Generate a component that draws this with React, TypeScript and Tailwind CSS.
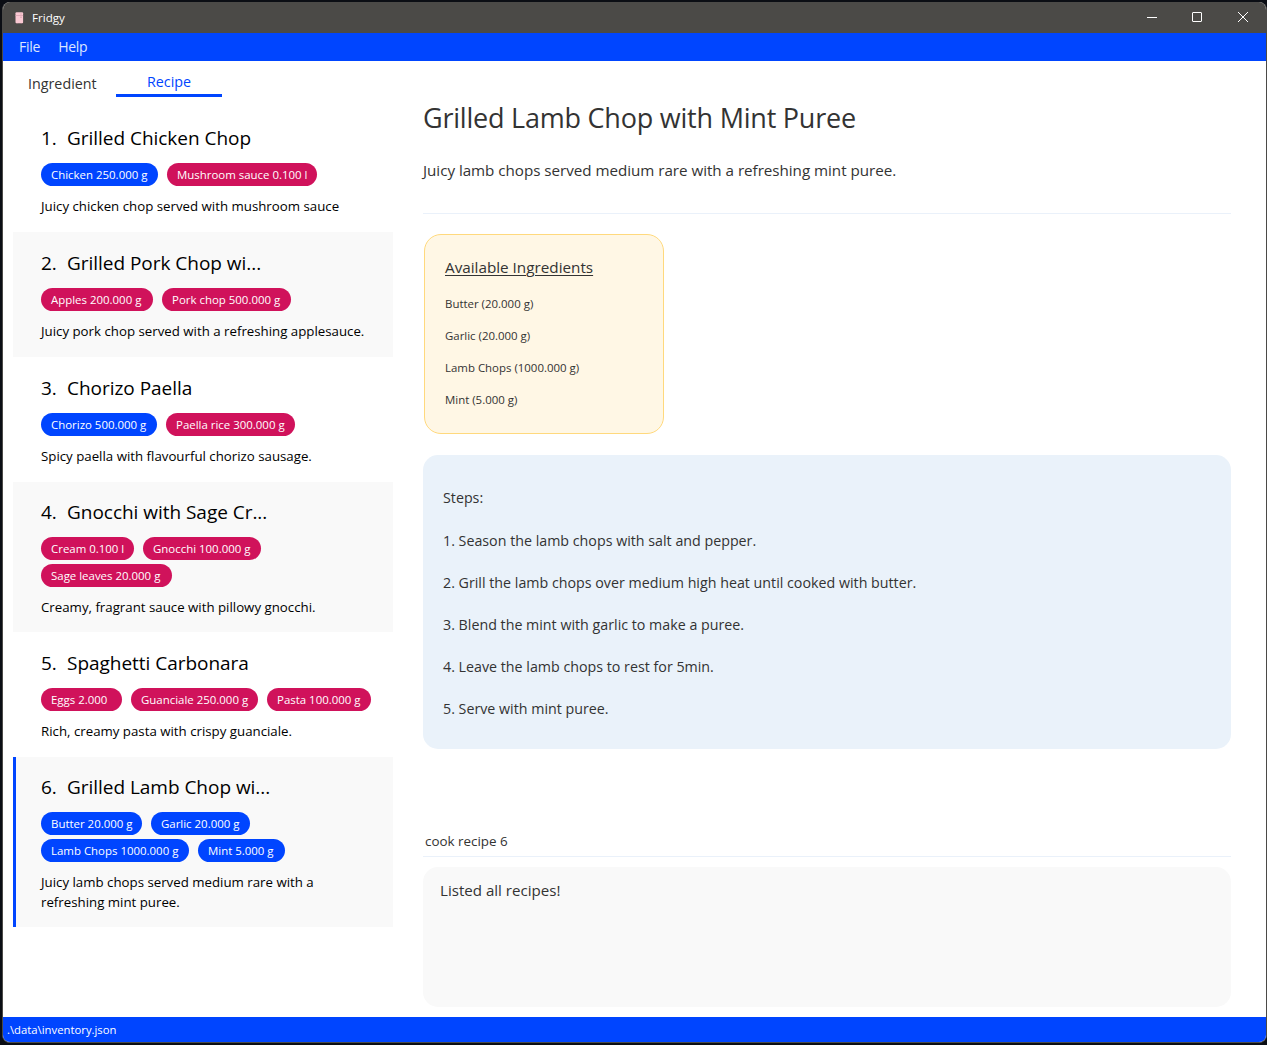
type Chip = { label: string; width: string; missing?: boolean };

type Recipe = {
  name: string;
  chips: Chip[];
  description: string;
  height: string;
  shaded?: boolean;
  selected?: boolean;
};

const recipes: Recipe[] = [
  {
    name: "Grilled Chicken Chop",
    chips: [
      { label: "Chicken 250.000 g", width: "w-[117px]" },
      { label: "Mushroom sauce 0.100 l", width: "w-[150px]", missing: true },
    ],
    description: "Juicy chicken chop served with mushroom sauce",
    height: "h-[125px]",
  },
  {
    name: "Grilled Pork Chop wi...",
    chips: [
      { label: "Apples 200.000 g", width: "w-[112px]", missing: true },
      { label: "Pork chop 500.000 g", width: "w-[129px]", missing: true },
    ],
    description: "Juicy pork chop served with a refreshing applesauce.",
    height: "h-[125px]",
    shaded: true,
  },
  {
    name: "Chorizo Paella",
    chips: [
      { label: "Chorizo 500.000 g", width: "w-[116px]" },
      { label: "Paella rice 300.000 g", width: "w-[129px]", missing: true },
    ],
    description: "Spicy paella with flavourful chorizo sausage.",
    height: "h-[125px]",
  },
  {
    name: "Gnocchi with Sage Cr...",
    chips: [
      { label: "Cream 0.100 l", width: "w-[93px]", missing: true },
      { label: "Gnocchi 100.000 g", width: "w-[118px]", missing: true },
      { label: "Sage leaves 20.000 g", width: "w-[131px]", missing: true },
    ],
    description: "Creamy, fragrant sauce with pillowy gnocchi.",
    height: "h-[150px]",
    shaded: true,
  },
  {
    name: "Spaghetti Carbonara",
    chips: [
      { label: "Eggs 2.000", width: "w-[81px]", missing: true },
      { label: "Guanciale 250.000 g", width: "w-[127px]", missing: true },
      { label: "Pasta 100.000 g", width: "w-[104px]", missing: true },
    ],
    description: "Rich, creamy pasta with crispy guanciale.",
    height: "h-[125px]",
  },
  {
    name: "Grilled Lamb Chop wi...",
    chips: [
      { label: "Butter 20.000 g", width: "w-[101px]" },
      { label: "Garlic 20.000 g", width: "w-[99px]" },
      { label: "Lamb Chops 1000.000 g", width: "w-[148px]" },
      { label: "Mint 5.000 g", width: "w-[87px]" },
    ],
    description: "Juicy lamb chops served medium rare with a refreshing mint puree.",
    height: "h-[170px]",
    shaded: true,
    selected: true,
  },
];

const available = ["Butter (20.000 g)", "Garlic (20.000 g)", "Lamb Chops (1000.000 g)", "Mint (5.000 g)"];

const steps = [
  "1. Season the lamb chops with salt and pepper.",
  "2. Grill the lamb chops over medium high heat until cooked with butter.",
  "3. Blend the mint with garlic to make a puree.",
  "4. Leave the lamb chops to rest for 5min.",
  "5. Serve with mint puree.",
];

function FridgeIcon() {
  return (
    <svg className="mt-px" width="9" height="12" viewBox="0 0 9 12" aria-hidden="true">
      <rect x="0.5" y="0.2" width="7.6" height="11" rx="1" fill="#f9c8d2" />
      <path d="M0.5 3.5h7.6" stroke="#dba3b1" strokeWidth="0.8" />
      <path d="M6 1.5v1M6 4.5v1.5" stroke="#c48e9c" strokeWidth="0.8" />
      <path d="M1.5 11.5h1.5M5.6 11.5h1.5" stroke="#8d6b75" strokeWidth="0.8" />
    </svg>
  );
}

function TitleBar() {
  return (
    <header className="flex h-[31px] shrink-0 items-center bg-[#4b4a47] pl-3 text-white">
      <FridgeIcon />
      <span className="ml-2 text-[11.6px]">Fridgy</span>
      <div className="ml-auto flex h-full items-center">
        <button className="flex h-full w-[46px] items-center justify-center pb-px" aria-label="Minimize">
          <svg width="10" height="10" viewBox="0 0 10 10" shapeRendering="crispEdges">
            <path d="M0 5.5h10" stroke="#fff" />
          </svg>
        </button>
        <button className="flex h-full w-[44px] items-center justify-center pb-px" aria-label="Maximize">
          <svg width="10" height="10" viewBox="0 0 10 10">
            <rect x="0.5" y="0.5" width="9" height="9" rx="0.5" fill="none" stroke="#fff" />
          </svg>
        </button>
        <button className="flex h-full w-[47px] items-center justify-center pb-px" aria-label="Close">
          <svg width="10" height="10" viewBox="0 0 10 10">
            <path d="M0 0l10 10M10 0L0 10" stroke="#fff" />
          </svg>
        </button>
      </div>
    </header>
  );
}

function RecipeCard({ recipe, index }: { recipe: Recipe; index: number }) {
  return (
    <li
      className={`flex flex-col justify-center border-l-[3px] pl-[25px] ${recipe.height} ${recipe.shaded ? "bg-[#f9f9f9]" : "bg-white"} ${
        recipe.selected ? "border-[#0045ff]" : "border-transparent"
      }`}
    >
      <div className="flex text-[19px] leading-[30px] tracking-[-0.03px]">
        <span className="w-[26px]">{index}.</span>
        <span>{recipe.name}</span>
      </div>
      <div className="mt-[10px] flex w-[335px] flex-wrap gap-x-[9px] gap-y-1">
        {recipe.chips.map((chip) => (
          <span
            key={chip.label}
            className={`h-[23px] rounded-full pl-[10px] text-[11.45px] leading-[23px] whitespace-nowrap text-white ${chip.width} ${
              chip.missing ? "bg-[#d0125b]" : "bg-[#0045ff]"
            }`}
          >
            {chip.label}
          </span>
        ))}
      </div>
      <p className="mt-[10px] w-[335px] text-[13.27px] leading-5">{recipe.description}</p>
    </li>
  );
}

function Sidebar() {
  return (
    <aside className="w-[390px] shrink-0 pl-[10px]">
      <nav className="flex h-[46px] text-[14.3px] leading-5">
        <div className="w-[103px] pt-[13px] pl-[15px] text-[#333]">Ingredient</div>
        <div className="h-9 w-[106px] border-b-[3px] border-[#0045ff] pt-[11px] text-center text-[#0045ff]">Recipe</div>
      </nav>
      <ul className="text-black">
        {recipes.map((recipe, i) => (
          <RecipeCard key={recipe.name} recipe={recipe} index={i + 1} />
        ))}
      </ul>
    </aside>
  );
}

function RecipeDetail() {
  return (
    <main className="ml-[30px] flex w-[808px] flex-col text-[#333]">
      <h1 className="mt-[37px] text-[27px] leading-10 tracking-[-0.22px]">Grilled Lamb Chop with Mint Puree</h1>
      <p className="mt-5 text-[15.2px] leading-6 tracking-[-0.03px]">Juicy lamb chops served medium rare with a refreshing mint puree.</p>
      <hr className="mt-[31px] border-[#eaf1fa]" />
      <section className="mt-5 ml-px h-[200px] w-[240px] rounded-[17px] border border-[#ffd97d] bg-[#fff7e5] pl-5">
        <h2 className="mt-5 text-[15.25px] leading-6 underline decoration-1 underline-offset-2">Available Ingredients</h2>
        <ul className="mt-[9px] text-[11.45px] leading-8">
          {available.map((item) => (
            <li key={item}>{item}</li>
          ))}
        </ul>
      </section>
      <section className="mt-[21px] h-[294px] rounded-[15px] bg-[#eaf2fa] pt-[22px] pl-5 text-[14.25px] leading-[42px]">
        <h2>Steps:</h2>
        <ol className="mt-px">
          {steps.map((step) => (
            <li key={step}>{step}</li>
          ))}
        </ol>
      </section>
      <div className="mt-[77px] h-[31px] border-b border-[#eaf1fa] pl-[2px] text-[13.4px] leading-[30px]">cook recipe 6</div>
      <section className="mt-[10px] h-[140px] rounded-[15px] bg-[#f9f9f9] pt-[11px] pl-[17px] text-[15.1px] leading-6">Listed all recipes!</section>
    </main>
  );
}

export default function App() {
  return (
    <div className="h-[1045px] w-[1267px] bg-[#0b0e14] pt-[2px] pl-[2px] font-['Open_Sans',sans-serif]">
      <div className="flex h-[1041px] w-[1265px] flex-col overflow-hidden rounded-lg border-x border-b border-[#4b4a47] bg-white">
        <TitleBar />
        <nav className="flex h-7 shrink-0 gap-[18px] bg-[#0045ff] pl-4 text-[14px] leading-7 tracking-[-0.25px] text-[#dce6ff]">
          <span>File</span>
          <span>Help</span>
        </nav>
        <div className="flex h-[956px] shrink-0">
          <Sidebar />
          <RecipeDetail />
        </div>
        <footer className="h-[25px] shrink-0 bg-[#0045ff] pl-1 text-[11.3px] leading-[25px] text-white">.\data\inventory.json</footer>
      </div>
    </div>
  );
}
